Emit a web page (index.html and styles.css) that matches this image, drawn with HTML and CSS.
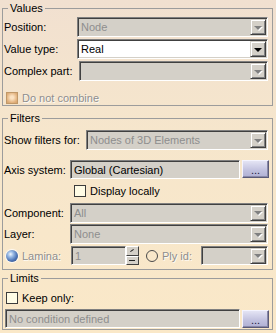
FILE: index.html
```html
<!DOCTYPE html>
<html lang="en">
<head>
    <meta charset="UTF-8">
    <meta name="viewport" content="width=device-width, initial-scale=1.0">
    <title>Values Filters</title>
    <link rel="stylesheet" href="styles.css">
</head>
<body>

<fieldset class="group group-values">
    <legend>Values</legend>
    <div class="row">
        <span class="label label-values">Position:</span>
        <div class="combo disabled"><span class="value">Node</span><span class="arrow"></span></div>
    </div>
    <div class="row">
        <span class="label label-values">Value type:</span>
        <div class="combo editable"><span class="value">Real</span><span class="arrow"></span></div>
    </div>
    <div class="row">
        <span class="label label-complex">Complex part:</span>
        <div class="combo disabled"><span class="value"></span><span class="arrow"></span></div>
    </div>
    <div class="row row-check row-combine">
        <span class="check check-disabled"></span>
        <span class="muted">Do not combine</span>
    </div>
</fieldset>

<fieldset class="group group-filters">
    <legend>Filters</legend>
    <div class="row">
        <span class="label label-show">Show filters for:</span>
        <div class="combo disabled"><span class="value">Nodes of 3D Elements</span><span class="arrow"></span></div>
    </div>
    <div class="row row-axis">
        <span class="label label-filters">Axis system:</span>
        <div class="field"><span class="value">Global (Cartesian)</span></div>
        <button class="more">...</button>
    </div>
    <div class="row row-check row-local">
        <span class="check"></span>
        <span>Display locally</span>
    </div>
    <div class="row row-component">
        <span class="label label-filters">Component:</span>
        <div class="combo disabled"><span class="value">All</span><span class="arrow"></span></div>
    </div>
    <div class="row">
        <span class="label label-filters">Layer:</span>
        <div class="combo disabled"><span class="value">None</span><span class="arrow"></span></div>
    </div>
    <div class="row row-lamina">
        <span class="radio radio-on"></span>
        <span class="muted label-lamina">Lamina:</span>
        <div class="spin">
            <div class="field field-spin"><span class="value">1</span></div>
            <div class="spin-buttons">
                <span class="spin-up"></span>
                <span class="spin-down"></span>
            </div>
        </div>
        <span class="radio"></span>
        <span class="muted label-ply">Ply id:</span>
        <div class="combo combo-ply disabled"><span class="value"></span><span class="arrow"></span></div>
    </div>
</fieldset>

<fieldset class="group group-limits">
    <legend>Limits</legend>
    <div class="row row-check row-keep">
        <span class="check"></span>
        <span>Keep only:</span>
    </div>
    <div class="row row-condition">
        <div class="field field-condition"><span class="value">No condition defined</span></div>
        <button class="more">...</button>
    </div>
</fieldset>

</body>
</html>
```

FILE: styles.css
```css
:root {
    --face: #d4d0c8;
    --shadow: #808080;
    --dark: #404040;
    --light: #ffffff;
    --muted-text: #8e8e8e;
    --frame: #9c9c9c;
}

body {
    margin: 0;
    width: 276px;
    height: 333px;
    overflow: hidden;
    background: linear-gradient(#f1e0d0, #f6e6cc 40%, #fae8c8);
    font-family: "Liberation Sans", Arial, sans-serif;
    font-size: 11px;
    color: #000;
}

.group {
    margin: 0 3px 0 2px;
    padding: 3px 3px 0 1px;
    border: 1px solid var(--frame);
    min-width: 0;
}

.group legend {
    margin-left: 4px;
    padding: 0 2px;
    line-height: 13px;
}

.group-values {
    margin-top: 2px;
    padding-top: 2px;
}

.group-filters {
    margin-top: 6px;
    padding-top: 5px;
    padding-bottom: 4px;
}

.group-limits {
    margin-top: 2px;
    padding-top: 6px;
    padding-bottom: 1px;
}

.row {
    display: flex;
    align-items: center;
    height: 20px;
    margin-bottom: 2px;
}

.row:last-child {
    margin-bottom: 0;
}

.label {
    flex: none;
}

.label-values {
    width: 73px;
}

.label-complex {
    width: 75px;
}

.label-show {
    width: 82px;
}

.label-filters {
    width: 66px;
}

/* combo boxes */
.combo {
    flex: 1;
    display: flex;
    align-items: center;
    height: 20px;
    box-sizing: border-box;
    border: 1px solid;
    border-color: var(--shadow) var(--light) var(--light) var(--shadow);
    box-shadow: inset 1px 1px 0 var(--dark), inset -1px -1px 0 var(--face);
    background: var(--face);
    padding: 2px 2px 2px 3px;
    margin-right: 1px;
}

.combo.editable {
    background: #fff;
    color: #000;
}

.combo.disabled .value {
    color: var(--muted-text);
}

.value {
    flex: 1;
    white-space: nowrap;
    overflow: hidden;
}

.arrow {
    flex: none;
    width: 16px;
    height: 16px;
    box-sizing: border-box;
    margin-right: -1px;
    background: var(--face);
    border: 1px solid;
    border-color: var(--face) var(--dark) var(--dark) var(--face);
    box-shadow: inset 1px 1px 0 var(--light), inset -1px -1px 0 var(--shadow);
    display: flex;
    justify-content: center;
    align-items: center;
}

.arrow::after {
    content: "";
    border-left: 4px solid transparent;
    border-right: 4px solid transparent;
    border-top: 4px solid #000;
    margin-top: 1px;
}

.combo.disabled .arrow::after {
    border-top-color: var(--shadow);
    filter: drop-shadow(1px 1px 0 #fff);
}

/* read only fields */
.field {
    display: flex;
    align-items: center;
    height: 19px;
    box-sizing: border-box;
    border: 1px solid;
    border-color: var(--shadow) var(--light) var(--light) var(--shadow);
    box-shadow: inset 1px 1px 0 var(--dark), inset -1px -1px 0 var(--face);
    background: var(--face);
    padding: 0 3px;
}

.row-axis .field {
    flex: 1;
    margin-right: 2px;
}

.more {
    flex: none;
    width: 27px;
    height: 18px;
    padding: 0 0 2px;
    box-sizing: border-box;
    border: 1px solid;
    border-color: #f4f4ff #5a5a78 #5a5a78 #f4f4ff;
    box-shadow: inset -1px -1px 0 #8888a8;
    background: linear-gradient(#e4e4f4, #c0c0de 60%, #b0b0d4);
    font-family: "Liberation Sans", Arial, sans-serif;
    font-size: 11px;
    line-height: 10px;
    color: #202040;
    display: flex;
    justify-content: center;
    align-items: flex-end;
}

.row-axis {
    margin-top: 10px;
    height: 19px;
}

.row-axis .more {
    margin-top: -1px;
}

/* check boxes and radios */
.row-check {
    height: 13px;
}

.row-combine {
    margin-top: 9px;
    margin-bottom: 0;
    height: 15px;
}

.row-local {
    margin-top: 5px;
    padding-left: 68px;
    margin-bottom: 0;
}

.row-keep {
    margin-bottom: 5px;
}

.check {
    flex: none;
    width: 12px;
    height: 12px;
    box-sizing: border-box;
    margin: 0 4px 0 2px;
    border: 1px solid #3c3c3c;
    background: #fffce6;
}

.check-disabled {
    border-color: #c09868;
    background: radial-gradient(circle at 50% 45%, #fbe2c2 20%, #e2b27e 70%, #d2a06a);
}

.muted {
    color: var(--muted-text);
    text-shadow: 1px 1px 0 rgba(255, 255, 255, 0.8);
}

.radio {
    flex: none;
    width: 12px;
    height: 12px;
    box-sizing: border-box;
    border-radius: 50%;
    border: 1px solid #4a4a4a;
    margin: 0 4px 0 2px;
}

.radio-on {
    border: none;
    background: radial-gradient(circle at 38% 35%, #f2f8ff 0, #9cbce6 25%, #4c74b6 60%, #2a4478 100%);
    box-shadow: 0 0 1px 1px rgba(255, 255, 255, 0.8);
}

.row-component {
    margin-top: 6px;
    height: 19px;
}

.row-lamina {
    margin-top: 1px;
    height: 19px;
}

.label-lamina {
    width: 49px;
    flex: none;
}

.spin {
    flex: none;
    display: flex;
    height: 19px;
}

.field-spin {
    width: 55px;
    color: var(--muted-text);
}

.spin-buttons {
    display: flex;
    flex-direction: column;
    width: 13px;
    margin-right: 5px;
}

.spin-buttons span {
    flex: 1;
    box-sizing: border-box;
    border: 1px solid;
    border-color: var(--light) var(--dark) var(--dark) var(--light);
    background: var(--face);
    position: relative;
}

.spin-up::after {
    content: "";
    position: absolute;
    left: 3px;
    top: 3px;
    width: 4px;
    border-top: 1px solid #222;
    transform: rotate(-35deg);
}

.spin-down::after {
    content: "";
    position: absolute;
    left: 2px;
    top: 3px;
    width: 6px;
    border-top: 1px solid #222;
}

.label-ply {
    width: 39px;
    flex: none;
}

.combo-ply {
    height: 19px;
}

.row-condition {
    height: 19px;
    margin-left: 1px;
}

.field-condition {
    flex: 1;
    margin-right: 2px;
    color: var(--muted-text);
}
```
